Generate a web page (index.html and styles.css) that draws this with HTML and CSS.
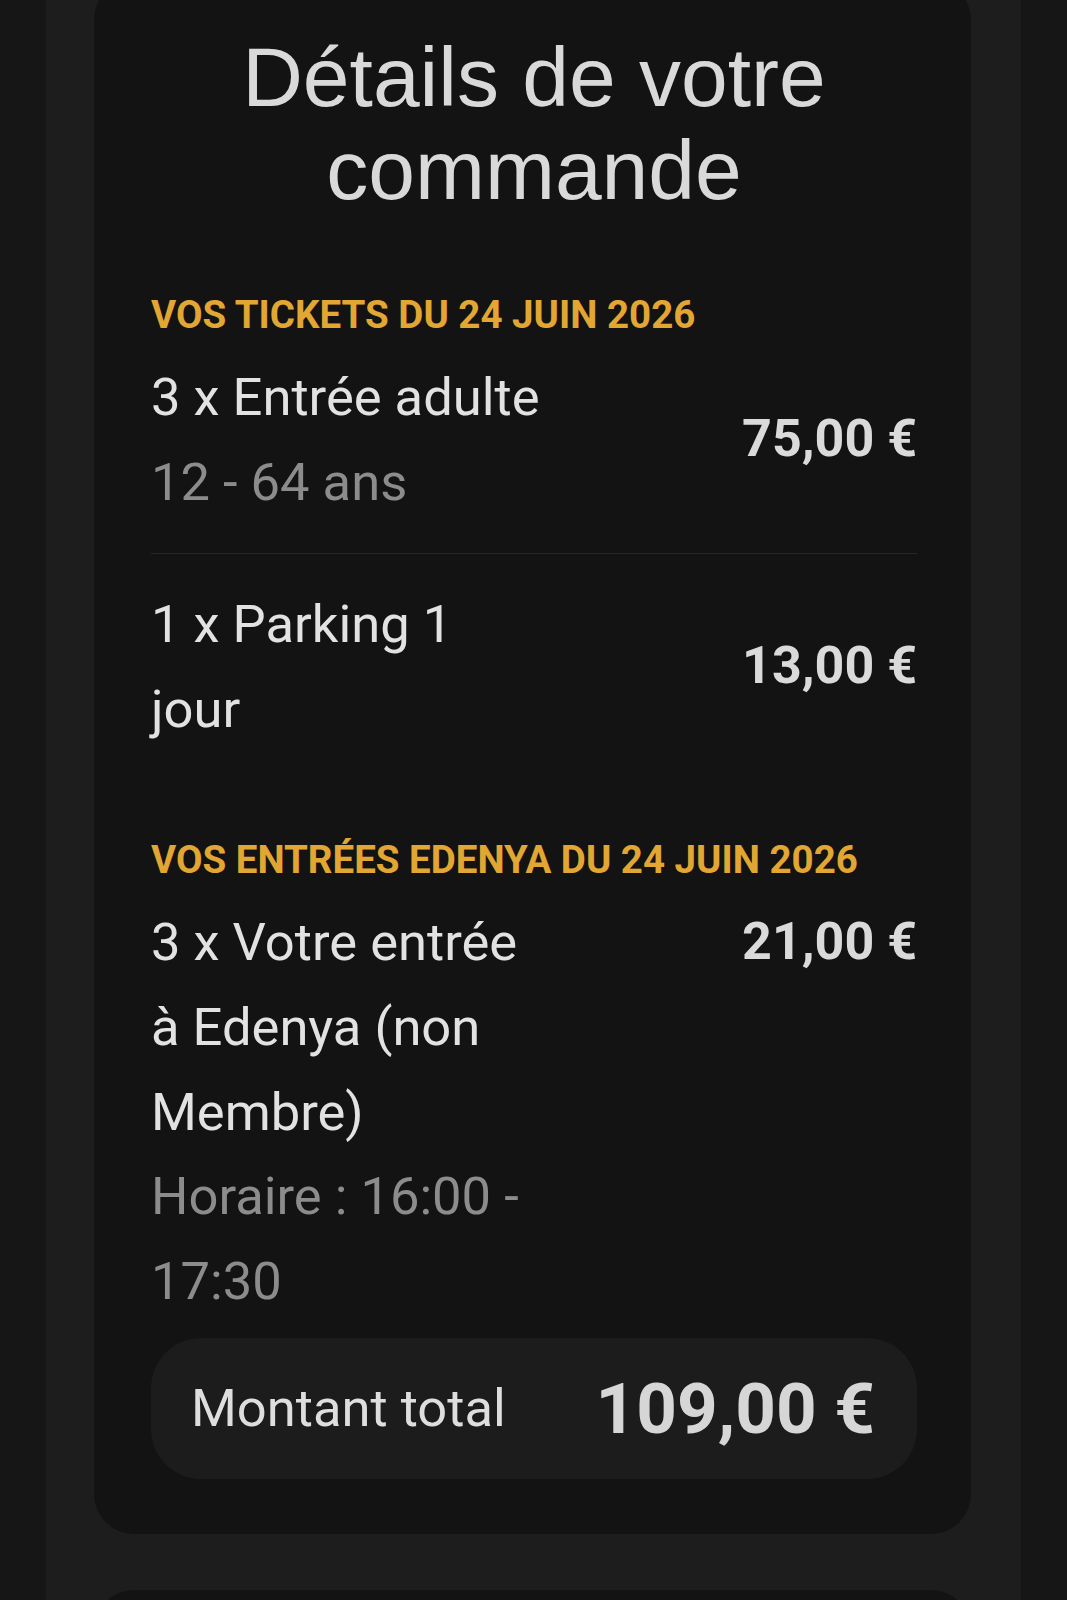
FILE: index.html
```html
<!DOCTYPE html>
<html lang="fr">
<head>
    <meta charset="UTF-8">
    <meta name="viewport" content="width=device-width, initial-scale=1.0">
    <title>Détails de votre commande</title>
    <link rel="stylesheet" href="styles.css">
</head>
<body>
    <div class="page">
        <!-- Récapitulatif de la commande -->
        <div class="card">
            <h1 class="card-title">Détails de votre commande</h1>

            <div class="section">
                <h2 class="section-title">Vos tickets du 24 juin 2026</h2>
                <div class="row">
                    <div class="item-name">
                        <div>3 x Entrée adulte</div>
                        <div class="item-sub">12 - 64 ans</div>
                    </div>
                    <div class="item-price">75,00 €</div>
                </div>
                <div class="row">
                    <div class="item-name">
                        <div>1 x Parking 1 jour</div>
                    </div>
                    <div class="item-price">13,00 €</div>
                </div>
            </div>

            <div class="section">
                <h2 class="section-title">Vos entrées Edenya du 24 juin 2026</h2>
                <div class="row row-top">
                    <div class="item-name">
                        <div>3 x Votre entrée à Edenya (non Membre)</div>
                        <div class="item-sub">Horaire : 16:00 - 17:30</div>
                    </div>
                    <div class="item-price">21,00 €</div>
                </div>
            </div>

            <!-- Total -->
            <div class="total">
                <span class="total-label">Montant total</span>
                <span class="total-price">109,00 €</span>
            </div>
        </div>

        <!-- Carte suivante (coupée) -->
        <div class="card card-next"></div>
    </div>
</body>
</html>
```

FILE: styles.css
```css
html, body {
    height: 100%;
}

body {
    margin: 0;
    background-color: #161616;
    font-family: Roboto, "Liberation Sans", sans-serif;
    color: #e2e2e2;
    overflow: hidden;
}

/* Bande centrale */
.page {
    box-sizing: border-box;
    height: 100%;
    margin: 0 46px;
    padding: 0 50px 0 48px;
    background-color: #1d1d1d;
    overflow: hidden;
}

/* Carte principale */
.card {
    margin-top: -20px;
    padding: 51px 54px 55px 57px;
    background-color: #131313;
    border-radius: 40px;
}

.card-title {
    margin: 0 0 75px;
    font-family: "Liberation Sans", Arial, sans-serif;
    font-size: 84px;
    font-weight: 400;
    line-height: 93px;
    text-align: center;
    color: #d9d9d9;
}

.section + .section {
    margin-top: 86px;
}

.section-title {
    margin: 0 0 17px;
    font-size: 38.5px;
    font-weight: 700;
    line-height: 46px;
    text-transform: uppercase;
    color: #e2a632;
}

/* Lignes d'articles */
.row {
    display: flex;
    justify-content: space-between;
    align-items: center;
    font-size: 52.5px;
    line-height: 84.6px;
}

.row + .row {
    margin-top: 29px;
    padding-top: 28px;
    border-top: 1px solid #252525;
}

.row-top {
    align-items: flex-start;
}

.item-name {
    width: 392px;
}

.item-sub {
    color: #8c8c8c;
}

.item-price {
    font-size: 52px;
    font-weight: 700;
    color: #dadada;
    white-space: nowrap;
}

/* Montant total */
.total {
    display: flex;
    justify-content: space-between;
    align-items: center;
    margin-top: 15px;
    padding: 28px 42px 28px 40px;
    background-color: #1c1c1c;
    border-radius: 50px;
}

.total-label {
    font-size: 52.5px;
    line-height: 84.6px;
    color: #dedede;
}

.total-price {
    font-size: 71px;
    font-weight: 700;
    color: #d6d6d6;
}

.card-next {
    margin-top: 56px;
    height: 120px;
    padding: 0;
}
```
